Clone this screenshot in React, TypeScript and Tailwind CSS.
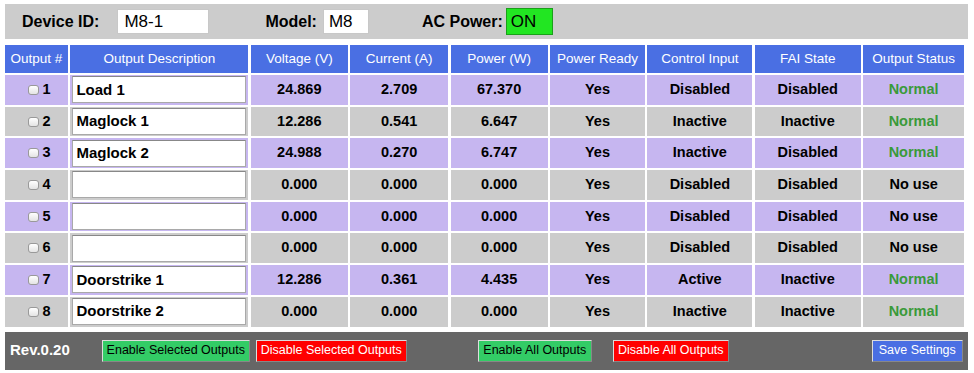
import React from 'react';

type Row = {
  n: number;
  desc: string;
  v: string;
  a: string;
  w: string;
  ready: string;
  ctrl: string;
  fai: string;
  status: string;
};

const rows: Row[] = [
  {n: 1, desc: 'Load 1', v: '24.869', a: '2.709', w: '67.370', ready: 'Yes', ctrl: 'Disabled', fai: 'Disabled', status: 'Normal'},
  {n: 2, desc: 'Maglock 1', v: '12.286', a: '0.541', w: '6.647', ready: 'Yes', ctrl: 'Inactive', fai: 'Inactive', status: 'Normal'},
  {n: 3, desc: 'Maglock 2', v: '24.988', a: '0.270', w: '6.747', ready: 'Yes', ctrl: 'Inactive', fai: 'Disabled', status: 'Normal'},
  {n: 4, desc: '', v: '0.000', a: '0.000', w: '0.000', ready: 'Yes', ctrl: 'Disabled', fai: 'Disabled', status: 'No use'},
  {n: 5, desc: '', v: '0.000', a: '0.000', w: '0.000', ready: 'Yes', ctrl: 'Disabled', fai: 'Disabled', status: 'No use'},
  {n: 6, desc: '', v: '0.000', a: '0.000', w: '0.000', ready: 'Yes', ctrl: 'Disabled', fai: 'Disabled', status: 'No use'},
  {n: 7, desc: 'Doorstrike 1', v: '12.286', a: '0.361', w: '4.435', ready: 'Yes', ctrl: 'Active', fai: 'Inactive', status: 'Normal'},
  {n: 8, desc: 'Doorstrike 2', v: '0.000', a: '0.000', w: '0.000', ready: 'Yes', ctrl: 'Inactive', fai: 'Inactive', status: 'Normal'},
];

const headers = [
  'Output #',
  'Output Description',
  'Voltage (V)',
  'Current (A)',
  'Power (W)',
  'Power Ready',
  'Control Input',
  'FAI State',
  'Output Status',
];

const cols =
  'grid grid-cols-[63px_178px_97px_98px_97px_95px_105px_106px_101px] gap-x-[2.4px]';

const Cell = ({children, bg}: {children: React.ReactNode; bg: string}) => (
  <div className={`flex h-full items-center justify-center ${bg}`}>{children}</div>
);

const Btn = ({label, classname}: {label: string; classname: string}) => (
  <button
    className={`h-[22px] whitespace-nowrap border border-t-[#ddd] border-l-[#ddd] border-r-[#888] border-b-[#888] px-0 text-[12.5px] leading-none ${classname}`}>
    {label}
  </button>
);

const App = () => {
  return (
    <div className="w-[974px] bg-white pt-[4px] pl-[5px] font-['Liberation_Sans',Arial,sans-serif] text-black">
      {/* device bar */}
      <div className="flex h-[35px] w-[963px] items-center bg-[#cccccc] text-[16px] font-bold">
        <span className="ml-[17px]">Device ID:</span>
        <div className="ml-[18px] flex h-[25px] w-[92px] items-center border border-[#c8c8c8] bg-white pl-[6px] text-[17px] font-normal">
          M8-1
        </div>
        <span className="ml-[56px]">Model:</span>
        <div className="ml-[6px] flex h-[25px] w-[46px] items-center border border-[#c8c8c8] bg-white pl-[5px] text-[17px] font-normal">
          M8
        </div>
        <span className="ml-[53px]">AC Power:</span>
        <div className="ml-[3px] flex h-[27px] w-[47px] items-center border border-[#1aa01a] bg-[#22e622] pl-[4px] text-[17px] font-normal">
          ON
        </div>
      </div>

      {/* table */}
      <div className="mt-[6px] w-[960px]">
        <div className={`${cols} h-[28px] text-[13.5px] text-white`}>
          {headers.map(h => (
            <Cell key={h} bg="bg-[#4a6fe3]">
              {h}
            </Cell>
          ))}
        </div>
        <div className="mt-[2px] flex flex-col gap-y-[2px]">
          {rows.map((r, index) => {
            const bg = index % 2 == 0 ? 'bg-[#c6b6f0]' : 'bg-[#cccccc]';
            return (
              <div key={r.n} className={`${cols} h-[29.7px] text-[14.5px] font-bold`}>
                <Cell bg={bg}>
                  <span className="ml-[6px] mr-[3px] inline-block h-[10px] w-[11px] rounded-[3px] border border-[#999] bg-gradient-to-b from-white to-[#e4e4e4]" />
                  {r.n}
                </Cell>
                <div className={`flex h-full items-center px-[2px] ${bg}`}>
                  <div className="flex h-[27px] w-full items-center border border-[#a9a9a9] border-t-[#888] bg-white pl-[3px] text-[15px]">
                    {r.desc}
                  </div>
                </div>
                <Cell bg={bg}>{r.v}</Cell>
                <Cell bg={bg}>{r.a}</Cell>
                <Cell bg={bg}>{r.w}</Cell>
                <Cell bg={bg}>{r.ready}</Cell>
                <Cell bg={bg}>{r.ctrl}</Cell>
                <Cell bg={bg}>{r.fai}</Cell>
                <Cell bg={bg}>
                  <span className={r.status == 'Normal' ? 'text-[#3a9a3a]' : ''}>{r.status}</span>
                </Cell>
              </div>
            );
          })}
        </div>
      </div>

      {/* footer */}
      <div className="mt-[5px] flex h-[38px] w-[963px] items-center bg-[#666666]">
        <span className="ml-[5px] text-[15px] font-bold text-white">Rev.0.20</span>
        <div className="ml-[32px] flex items-center">
          <Btn label="Enable Selected Outputs" classname="w-[148px] bg-[#33cc66] text-black" />
          <Btn label="Disable Selected Outputs" classname="ml-[6px] w-[151px] bg-[#ff0000] text-white" />
          <Btn label="Enable All Outputs" classname="ml-[71px] w-[114px] bg-[#33cc66] text-black" />
          <Btn label="Disable All Outputs" classname="ml-[21px] w-[116px] bg-[#ff0000] text-white" />
          <Btn label="Save Settings" classname="ml-[143px] w-[91px] bg-[#4a6fe3] text-white" />
        </div>
      </div>
    </div>
  );
};

export default App;
